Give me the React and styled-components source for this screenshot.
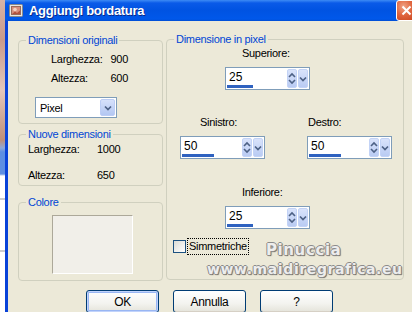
import React from "react";
import styled, { createGlobalStyle } from "styled-components";

const GlobalStyle = createGlobalStyle`
  html, body {
    margin: 0;
    padding: 0;
    overflow: hidden;
    background: #ffffff;
  }
  body {
    font-family: "Liberation Sans", Arial, sans-serif;
    font-size: 11px;
    letter-spacing: -0.3px;
    color: #000;
  }
`;

const Page = styled.div`
  display: flex;
  width: 412px;
  height: 312px;
  overflow: hidden;
`;

const Backdrop = styled.div`
  flex: 0 0 5px;
  background: linear-gradient(
    #d7b3a6 0,
    #c99a8a 40px,
    #e3c7bb 90px,
    #bf8f78 140px,
    #8fa8d8 148px,
    #5d8fe2 152px,
    #5d8fe2 174px,
    #ffffff 176px,
    #ffffff 198px,
    #9a9a9a 199px,
    #ffffff 200px,
    #ffffff 250px,
    #9a9a9a 251px,
    #ffffff 252px
  );
`;

const Window = styled.div`
  flex: 0 0 415px;
  display: flex;
  flex-direction: column;
`;

const TitleBar = styled.div`
  height: 24px;
  display: flex;
  align-items: center;
  padding: 0 3px 0 4px;
  background: linear-gradient(
    #3d8bf5 0,
    #0a5ae8 3px,
    #0053e2 10px,
    #0058ea 19px,
    #0049c9 22px,
    #0842c0 24px
  );
`;

const Title = styled.span`
  flex: 1;
  margin-left: 5px;
  color: #fff;
  font-family: "Liberation Sans", Arial, sans-serif;
  font-weight: bold;
  font-size: 13px;
  letter-spacing: -0.3px;
  text-shadow: 1px 1px 0 #0a2a8a;
`;

const CloseButton = styled.div`
  width: 21px;
  height: 21px;
  box-sizing: border-box;
  border: 1px solid #fff;
  border-radius: 3px;
  background: radial-gradient(circle at 35% 30%, #f0a487 0, #e0663f 45%, #c8411b 100%);
  display: flex;
  align-items: center;
  justify-content: center;
`;

const Body = styled.div`
  flex: 1;
  background: #ece9d8;
  border-left: 3px solid #0842d8;
  padding: 18px 0 0 10px;
`;

const Columns = styled.div`
  display: flex;
  gap: 3px;
`;

const LeftColumn = styled.div`
  width: 145px;
  display: flex;
  flex-direction: column;
`;

const Group = styled.div`
  position: relative;
  box-sizing: border-box;
  height: ${(p) => p.$height}px;
  width: ${(p) => p.$width}px;
  margin-top: ${(p) => p.$top || 0}px;
  border: 1px solid #d0d0bf;
  border-radius: 4px;
  padding: ${(p) => p.$pad || "0"};
`;

const Legend = styled.span`
  position: absolute;
  top: -8px;
  left: 7px;
  padding: 0 2px;
  background: #ece9d8;
  color: #0046d5;
  line-height: 14px;
`;

const InfoGrid = styled.div`
  display: grid;
  grid-template-columns: ${(p) => p.$cols};
  grid-auto-rows: 16px;
  row-gap: ${(p) => p.$gap}px;
  margin-left: ${(p) => p.$indent || 0}px;
  line-height: 16px;
`;

const Value = styled.span`
  text-align: ${(p) => (p.$right ? "right" : "left")};
`;

const Select = styled.div`
  margin-top: 11px;
  width: 82px;
  height: 21px;
  box-sizing: border-box;
  border: 1px solid #7f9db9;
  background: #fff;
  display: flex;
  align-items: center;
  padding: 1px;
`;

const SelectText = styled.span`
  flex: 1;
  padding-left: 3px;
`;

const SelectButton = styled.div`
  width: 15px;
  height: 17px;
  border: 1px solid #bccdf5;
  border-radius: 2px;
  box-sizing: border-box;
  background: linear-gradient(#d6e1fb, #b3c7f2);
  display: flex;
  align-items: center;
  justify-content: center;
`;

const Swatch = styled.div`
  width: 81px;
  height: 59px;
  margin: 12px 0 0 33px;
  box-sizing: border-box;
  border-top: 1px solid #aca899;
  border-left: 1px solid #aca899;
  border-right: 1px solid #fff;
  border-bottom: 1px solid #fff;
  background: #f1efe9;
`;

const PixelGroup = styled(Group)`
  display: flex;
  flex-direction: column;
`;

const FieldRow = styled.div`
  display: flex;
  gap: 42px;
  margin-top: ${(p) => p.$top}px;
  margin-left: ${(p) => p.$indent}px;
`;

const Field = styled.div`
  display: flex;
  flex-direction: column;
  gap: 7px;
`;

const FieldLabel = styled.span`
  line-height: 14px;
  padding-left: ${(p) => p.$offset}px;
`;

const SpinBox = styled.div`
  width: 85px;
  height: 23px;
  box-sizing: border-box;
  border: 1px solid #7f9db9;
  background: #fff;
  display: flex;
`;

const SpinInput = styled.div`
  flex: 1;
  display: flex;
  flex-direction: column;
  padding: 1px 0 1px 1px;
`;

const SpinValue = styled.span`
  flex: 1;
  padding-left: 2px;
  font-size: 12px;
  letter-spacing: 0;
  line-height: 16px;
`;

const SpinFill = styled.div`
  height: 3px;
  background: #2f62c0;
`;

const SpinButton = styled.div`
  width: 10px;
  margin: 1px 1px 1px 0;
  box-sizing: border-box;
  border: 1px solid #c3d3f6;
  border-radius: 2px;
  background: linear-gradient(#d9e3fb, #b9cbf3);
  display: flex;
  align-items: center;
  justify-content: center;
`;

const CheckRow = styled.div`
  display: flex;
  align-items: center;
  gap: 2px;
  margin-top: 10px;
`;

const CheckBox = styled.span`
  width: 13px;
  height: 13px;
  box-sizing: border-box;
  border: 1px solid #1c5180;
  background: linear-gradient(135deg, #dcdcd5, #ffffff);
`;

const CheckLabel = styled.span`
  outline: 1px dotted #000;
  padding: 1px 1px;
  line-height: 13px;
`;

const Watermark = styled.div`
  position: absolute;
  left: 40px;
  top: 201px;
  font-family: "DejaVu Sans", Verdana, sans-serif;
  font-weight: bold;
  letter-spacing: 0.6px;
  color: #ededed;
  text-shadow: 1px 0 0 #8b8b8b, -1px 0 0 #8b8b8b, 0 1px 0 #8b8b8b, 0 -1px 0 #8b8b8b,
    1px 1px 1px #555;
  pointer-events: none;
`;

const WatermarkLine = styled.div`
  padding-left: ${(p) => p.$offset || 0}px;
  font-size: ${(p) => p.$size}px;
  line-height: 19px;
  white-space: nowrap;
`;

const ButtonRow = styled.div`
  display: flex;
  gap: 14px;
  margin: 9px 0 0 68px;
`;

const Button = styled.div`
  width: 73px;
  height: 23px;
  box-sizing: border-box;
  border: 1px solid #003c74;
  border-radius: 3px;
  background: linear-gradient(#ffffff, #f3f3ef 60%, #e4e3da);
  box-shadow: ${(p) => (p.$default ? "inset 0 0 0 1px #c1d3fb, inset 0 0 0 2px #99b6f3" : "inset 0 -1px 0 #d6d0c5")};
  display: flex;
  align-items: center;
  justify-content: center;
  font-size: 12px;
  line-height: 14px;
`;

function AppIcon() {
  return (
    <svg width="15" height="15" viewBox="0 0 15 15">
      <rect x="0.5" y="1.5" width="13" height="12" rx="1" fill="#e9e6df" stroke="#8a8a8a" />
      <rect x="2.5" y="3.5" width="9" height="8" fill="#d98f7c" stroke="#9a6a5a" />
      <circle cx="6" cy="6.5" r="1.8" fill="#f3d3c0" />
      <path d="M3 11 L6 8.5 L8 10 L11 7.5 V11 Z" fill="#b2513c" />
    </svg>
  );
}

function UpDownGlyph() {
  return (
    <svg width="8" height="13" viewBox="0 0 8 13">
      <path d="M1 5 L4 2 L7 5" fill="none" stroke="#4d6185" strokeWidth="1.6" />
      <path d="M1 8 L4 11 L7 8" fill="none" stroke="#4d6185" strokeWidth="1.6" />
    </svg>
  );
}

function DownGlyph() {
  return (
    <svg width="8" height="6" viewBox="0 0 8 6">
      <path d="M1 1.5 L4 4.5 L7 1.5" fill="none" stroke="#4d6185" strokeWidth="1.7" />
    </svg>
  );
}

function Spinner({ value, fill }) {
  return (
    <SpinBox>
      <SpinInput>
        <SpinValue>{value}</SpinValue>
        <SpinFill style={{ width: fill }} />
      </SpinInput>
      <SpinButton>
        <UpDownGlyph />
      </SpinButton>
      <SpinButton>
        <DownGlyph />
      </SpinButton>
    </SpinBox>
  );
}

function SpinField({ label, offset, value, fill }) {
  return (
    <Field>
      <FieldLabel $offset={offset}>{label}</FieldLabel>
      <Spinner value={value} fill={fill} />
    </Field>
  );
}

export default function App() {
  return (
    <>
      <GlobalStyle />
      <Page>
        <Backdrop />
        <Window>
          <TitleBar>
            <AppIcon />
            <Title>Aggiungi bordatura</Title>
            <CloseButton>
              <svg width="11" height="11" viewBox="0 0 11 11">
                <path d="M1.5 1.5 L9.5 9.5 M9.5 1.5 L1.5 9.5" stroke="#fff" strokeWidth="2" />
              </svg>
            </CloseButton>
          </TitleBar>
          <Body>
            <Columns>
              <LeftColumn>
                <Group $height={84} $top={1} $pad="10px 0 0 16px">
                  <Legend>Dimensioni originali</Legend>
                  <InfoGrid $cols="56px 21px" $gap={3} $indent={16}>
                    <span>Larghezza:</span>
                    <Value $right>900</Value>
                    <span>Altezza:</span>
                    <Value $right>600</Value>
                  </InfoGrid>
                  <Select>
                    <SelectText>Pixel</SelectText>
                    <SelectButton>
                      <DownGlyph />
                    </SelectButton>
                  </Select>
                </Group>
                <Group $height={52} $top={10} $pad="6px 0 0 9px">
                  <Legend>Nuove dimensioni</Legend>
                  <InfoGrid $cols="69px 40px" $gap={10}>
                    <span>Larghezza:</span>
                    <Value>1000</Value>
                    <span>Altezza:</span>
                    <Value>650</Value>
                  </InfoGrid>
                </Group>
                <Group $height={79} $top={16}>
                  <Legend>Colore</Legend>
                  <Swatch />
                </Group>
              </LeftColumn>
              <PixelGroup $height={241} $width={238} $pad="6px 6px">
                <Legend>Dimensione in pixel</Legend>
                <FieldRow $top={0} $indent={52}>
                  <SpinField label="Superiore:" offset={17} value="25" fill={26} />
                </FieldRow>
                <FieldRow $top={25} $indent={7}>
                  <SpinField label="Sinistro:" offset={20} value="50" fill={32} />
                  <SpinField label="Destro:" offset={1} value="50" fill={32} />
                </FieldRow>
                <FieldRow $top={26} $indent={52}>
                  <SpinField label="Inferiore:" offset={17} value="25" fill={26} />
                </FieldRow>
                <CheckRow>
                  <CheckBox />
                  <CheckLabel>Simmetriche</CheckLabel>
                </CheckRow>
                <Watermark>
                  <WatermarkLine $offset={59} $size={15}>Pinuccia</WatermarkLine>
                  <WatermarkLine $size={14}>www.maidiregrafica.eu</WatermarkLine>
                </Watermark>
              </PixelGroup>
            </Columns>
            <ButtonRow>
              <Button $default>OK</Button>
              <Button>Annulla</Button>
              <Button>?</Button>
            </ButtonRow>
          </Body>
        </Window>
      </Page>
    </>
  );
}
